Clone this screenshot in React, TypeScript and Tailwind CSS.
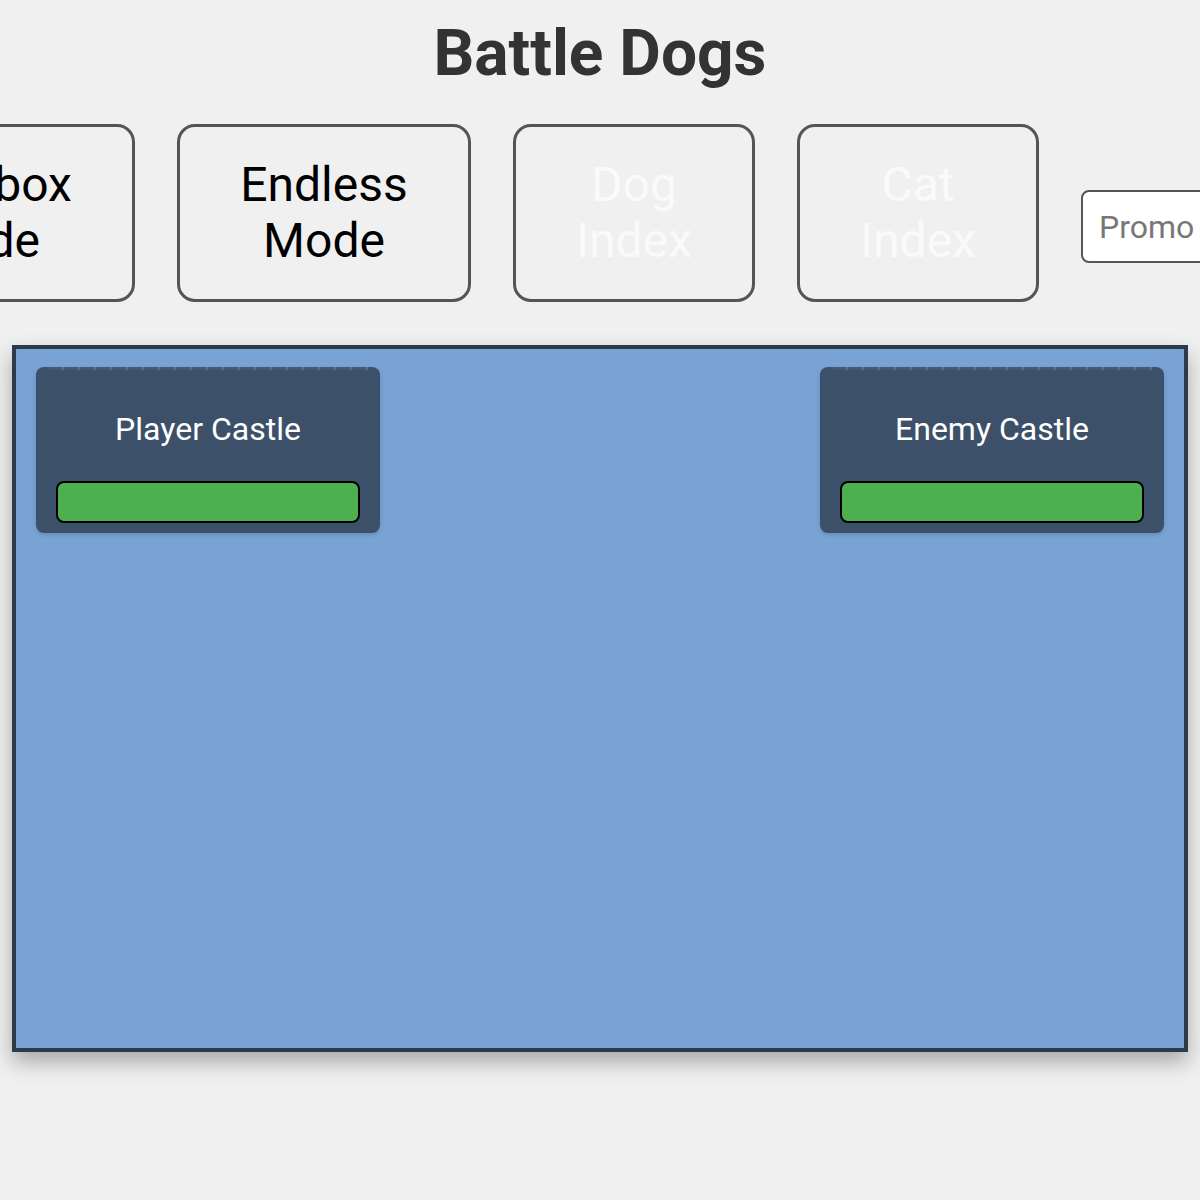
import React from 'react';

const CastlePanel: React.FC<{ label: string }> = ({ label }) => (
    <div className="relative w-[344px] rounded-[8px] bg-[#3c5069] pt-[38px] px-[20px] pb-[10px] shadow-[0_2px_4px_rgba(0,0,0,0.15)]">
        <div className="absolute left-[12px] right-[12px] top-0 h-[3px] bg-[repeating-linear-gradient(90deg,#4a6080_0px,#4a6080_14px,#6a88b0_14px,#6a88b0_16px)] opacity-60" />
        <div className="text-center text-white text-[32px] leading-[48px]">{label}</div>
        <div className="mt-[28px] h-[42px] rounded-[8px] border-2 border-black bg-[#4caf50]" />
    </div>
);

const App: React.FC = () => {
    return (
        <div className="min-h-[1200px] w-[1200px] overflow-hidden bg-[#f0f0f0] font-['Roboto',sans-serif]">
            <h1 className="pt-[14px] text-center text-[64px] leading-[80px] font-bold text-[#333]">Battle Dogs</h1>
            <div className="mt-[30px] flex justify-center items-start gap-[42px]">
                <button className="shrink-0 w-[312px] h-[178px] rounded-[18px] border-[3px] border-[#555] px-[60px] text-[48px] leading-[56px] text-black">Sandbox Mode</button>
                <button className="shrink-0 w-[294px] h-[178px] rounded-[18px] border-[3px] border-[#555] px-[60px] text-[48px] leading-[56px] text-black">Endless Mode</button>
                <button className="shrink-0 w-[242px] h-[178px] rounded-[18px] border-[3px] border-[#555] px-[60px] text-[48px] leading-[56px] text-[#fafafa]">Dog Index</button>
                <button className="shrink-0 w-[242px] h-[178px] rounded-[18px] border-[3px] border-[#555] px-[60px] text-[48px] leading-[56px] text-[#fafafa]">Cat Index</button>
                <input
                    placeholder="Promo Code"
                    className="shrink-0 mt-[66px] w-[296px] h-[73px] rounded-[8px] border-2 border-[#555] bg-white px-[16px] text-[32px] text-[#333] placeholder:text-[#777] outline-none"
                />
            </div>
            <div className="mx-[12px] mt-[43px] h-[707px] border-4 border-[#2c3a4a] bg-[#79a3d5] shadow-[0_10px_20px_rgba(0,0,0,0.3)] px-[20px] pt-[18px] flex justify-between items-start">
                <CastlePanel label="Player Castle" />
                <CastlePanel label="Enemy Castle" />
            </div>
        </div>
    );
};

export default App;
